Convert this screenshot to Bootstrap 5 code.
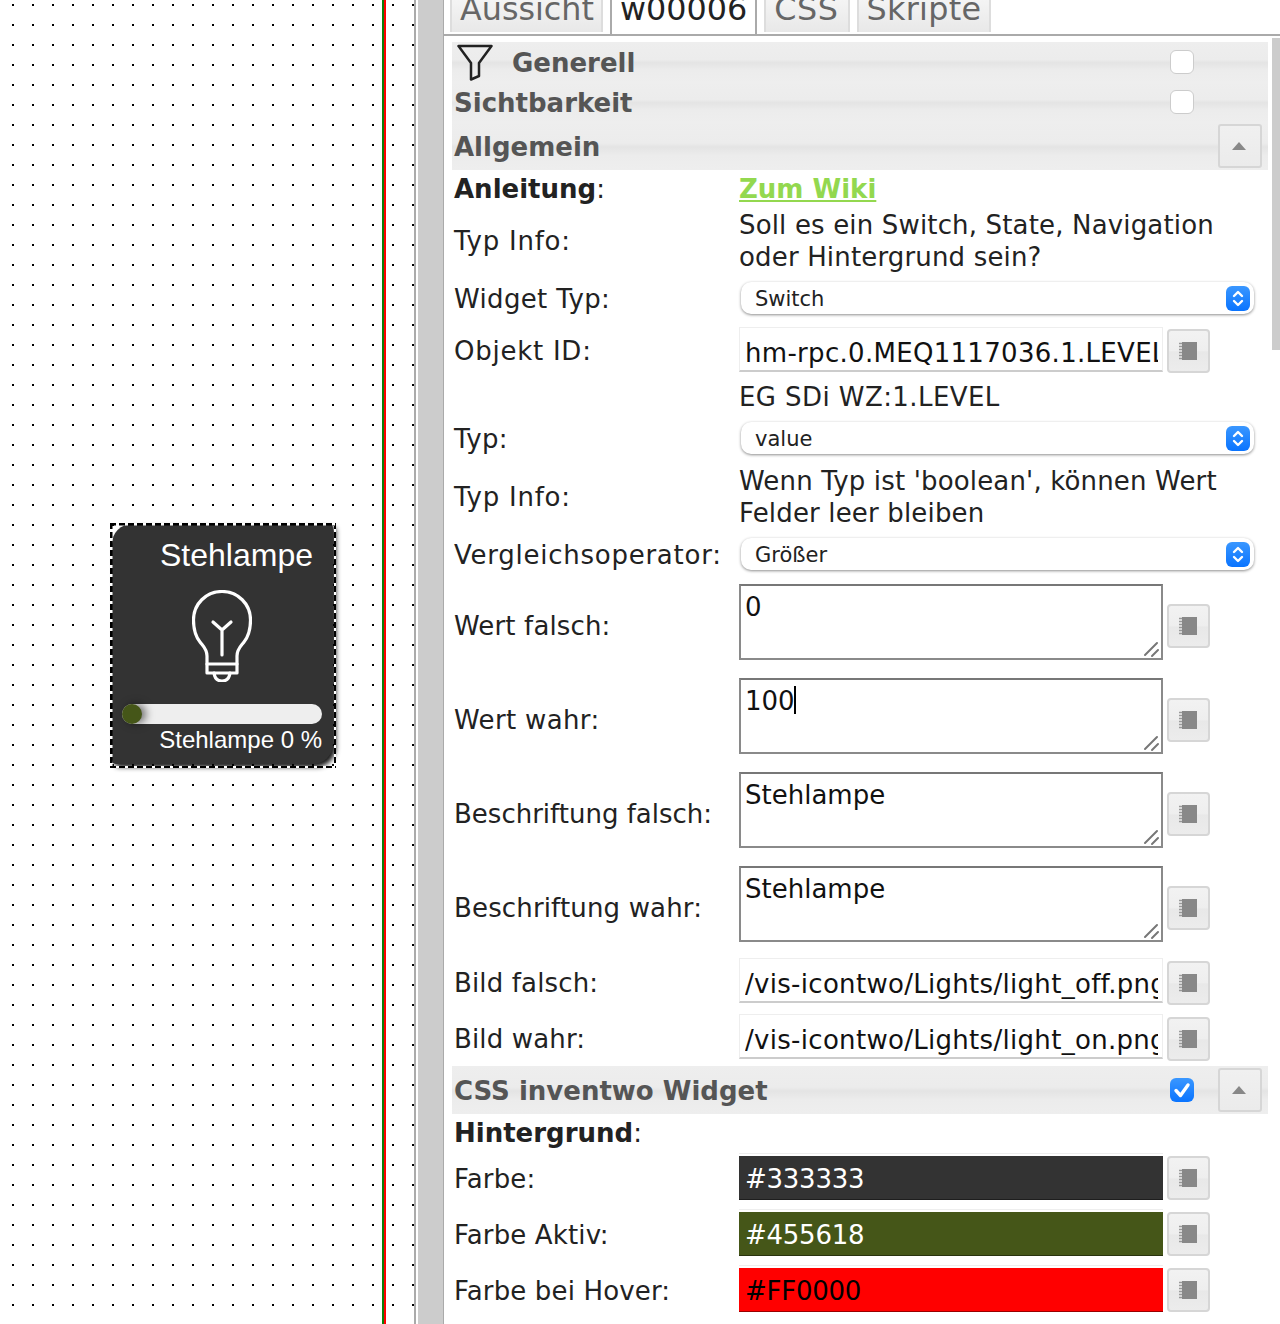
<!DOCTYPE html>
<html lang="de">
<head>
<meta charset="utf-8">
<title>Widget</title>
<link href="https://cdn.jsdelivr.net/npm/bootstrap@5.3.0/dist/css/bootstrap.min.css" rel="stylesheet">
<style>
html,body{height:1324px;overflow:hidden;background:#fff;}
body{font-family:"DejaVu Sans",sans-serif;font-size:26px;line-height:32px;color:#222;}
.stage{width:1280px;height:1324px;}
.canvasbox{position:relative;width:416px;height:1324px;flex:none;border-right:2px solid #aaa;
 background-image:url("data:image/svg+xml,%3Csvg xmlns='http://www.w3.org/2000/svg' width='20' height='20'%3E%3Crect x='12' y='4' width='2' height='2' fill='%23000'/%3E%3C/svg%3E");}
.guide{position:absolute;left:382px;top:0;width:4px;height:1324px;background:linear-gradient(90deg,#0a800a 0 50%,#f00 50% 100%);}
.lampe{position:absolute;left:112px;top:524px;width:221px;height:240px;background:#333;color:#fff;font-family:"Liberation Sans",sans-serif;
 border-radius:20px 4px 20px 4px;box-shadow:3px 3px 5px rgba(0,0,0,.9);padding:0 11px 0 10px;}
.lampe-frame{position:absolute;left:-2px;top:-1px;right:-3px;bottom:-4px;pointer-events:none;
 background:
  repeating-linear-gradient(90deg,#000 0 6px,#fff 6px 9px) left top/100% 2.500px no-repeat,
  repeating-linear-gradient(90deg,#000 0 6px,#fff 6px 9px) left bottom/100% 2.500px no-repeat,
  repeating-linear-gradient(180deg,#000 0 6px,#fff 6px 9px) left top/2.500px 100% no-repeat,
  repeating-linear-gradient(180deg,#000 0 6px,#fff 6px 9px) right top/2.500px 100% no-repeat;}
.lampe-title{font-size:32px;line-height:36px;text-align:right;padding:13px 9px 0 0;}
.lampe-icon{display:block;margin:17px auto 0 70px;width:60px;height:92px;}
.lampe-track{height:20px;border-radius:10px;background:#eee;margin-top:22px;position:relative;}
.lampe-knob{position:absolute;left:0;top:0;width:20px;height:20px;border-radius:50%;background:#455618;box-shadow:4px 0 8px rgba(0,0,0,.55);}
.lampe-label{font-size:24px;line-height:28px;text-align:right;margin-top:2px;}
.gutter{width:25px;height:1324px;background:#ccc;flex:none;margin-left:2px;}
.panel{width:837px;flex:none;border-left:1px solid #aaa;position:relative;height:1324px;overflow:hidden;}
.scrolltrack{position:absolute;right:0;top:38px;width:8px;height:312px;background:#ccc;}
.tabbar{height:36px;border-bottom:2px solid #aaa;padding-left:6px;gap:7px;overflow:hidden;}
.tabitem{padding:0 8px;font-size:31.8px;line-height:42px;color:#666;background:linear-gradient(#f4f4f4 0,#e8e8e8 100%);border:1px solid #ddd;border-width:0 2px 0 2px;height:32px;display:flex;align-items:flex-end;}
.tabitem span{display:block;margin-bottom:2px;}
.tabitem.tabfirst{padding-right:7px;}
.tabitem.tabcss{letter-spacing:.6px;padding-right:9px;}
.tabitem.tablast{letter-spacing:.3px;}
.tabitem.tabnow{background:#fff;color:#222;border-color:#aaa;height:34px;}
.tabitem.tabnow span{margin-bottom:4px;}
.wrapbody{padding:6px 4px 0 8px;width:828px;}
.sect{background:linear-gradient(#eee 0,#ececec 44%,#e4e4e4 52%,#ececec 70%,#eee 100%);font-weight:700;color:#555;padding-left:2px;padding-top:2px;}
.sect.s40{height:40px;}
.sect.s48{height:48px;}
.sect.tight{margin-top:-1px;}
.filtericon{width:36px;height:38px;margin:-2px 19px 0 3px;flex:none;}
.sect-end{margin-left:auto;}
.slotcheck{width:48px;display:flex;justify-content:center;margin-top:-2px;}
.slotbtn{width:44px;margin-right:6px;margin-top:-2px;}
.slotbtn.gap12{margin-left:12px;}
.slotblank{width:62px;}
.tick.form-check-input{width:24px;height:24px;margin:0;border:1.5px solid #ccc;border-radius:6px;background-color:#fff;}
.tick.form-check-input:checked{border:0;background-size:100% 100%;
 background-image:url("data:image/svg+xml,%3Csvg xmlns='http://www.w3.org/2000/svg' viewBox='0 0 24 24'%3E%3Cpath d='M6 12.500l4.500 5L18 7' fill='none' stroke='%23fff' stroke-width='3.4' stroke-linecap='round' stroke-linejoin='round'/%3E%3C/svg%3E"),linear-gradient(#3a97ff,#0a74ff);}
.foldbtn{width:44px;height:44px;padding:0;border:2px solid #d6d6d6;border-radius:3px;background:linear-gradient(#f0f0f0,#ebebeb);display:flex;align-items:center;justify-content:center;}
.foldbtn i{display:block;width:0;height:0;border-left:7.500px solid transparent;border-right:7.500px solid transparent;border-bottom:8px solid #888;margin-right:2px;}
.frow{padding-left:2px;}
.fname{width:285px;flex:none;white-space:nowrap;}
.fname.low{padding-top:2px;}
.fval{width:424px;flex:none;}
.fval.widetext{width:500px;letter-spacing:.16px;}
.sp2{letter-spacing:.15px;}.sp3{letter-spacing:.35px;}.sp4{letter-spacing:.42px;}.sp7{letter-spacing:.75px;}
.upper{padding-bottom:2px;}
.rh36{height:36px;}.rh39{height:39px;}.rh50{height:50px;}.rh52{height:52px;}.rh56{height:56px;}.rh64{height:64px;}.rh94{height:94px;}
.dropped{padding-top:4px;}
.nudge{margin-top:2px;}
.fbtnslot{margin-left:4px;flex:none;}
.zumwiki{color:#93d84f;font-weight:700;text-decoration:underline;}
.picker{width:43px;height:44px;padding:0 2px 0 0;border:2px solid #d6d6d6;border-radius:4px;background:linear-gradient(#f2f2f2 0,#eee 50%,#e8e8e8 52%,#ececec 100%);display:flex;align-items:center;justify-content:center;}
.picker svg{display:block;}
.macselect.form-select{height:32px;width:513px;margin:0 0 2px 2px;padding:2px 40px 0 14px;font-family:"DejaVu Sans",sans-serif;font-size:21px;line-height:28px;color:#222;border:0;border-radius:10px;box-shadow:0 1px 3px rgba(0,0,0,.45);
 background-color:#fff;background-size:24px 25px;background-position:right 4px center;
 background-image:url("data:image/svg+xml,%3Csvg xmlns='http://www.w3.org/2000/svg' viewBox='0 0 24 25'%3E%3Cdefs%3E%3ClinearGradient id='g' x1='0' y1='0' x2='0' y2='1'%3E%3Cstop offset='0' stop-color='%233a97ff'/%3E%3Cstop offset='1' stop-color='%230a74ff'/%3E%3C/linearGradient%3E%3C/defs%3E%3Crect width='24' height='25' rx='6' fill='url(%23g)'/%3E%3Cpath d='M8 10l4-4 4 4M8 15l4 4 4-4' fill='none' stroke='%23fff' stroke-width='2.4' stroke-linecap='round' stroke-linejoin='round'/%3E%3C/svg%3E");}
.macselect.nudge.form-select{margin-top:2px;}
.lineinput.form-control{height:45px;width:424px;padding:7px 4px 0 5px;font-family:"DejaVu Sans",sans-serif;font-size:26px;line-height:34px;letter-spacing:.3px;color:#111;border:1px solid #eee;border-bottom:2px solid #ccc;border-radius:0;background:#fff;box-shadow:none;}
.riseA{margin-bottom:3px;}
.riseB{margin-bottom:5px;}
.areainput.form-control{display:block;height:76px;width:424px;min-height:0;padding:4px 4px 0 4px;font-family:"DejaVu Sans",sans-serif;font-size:26px;line-height:34px;color:#111;border:2px solid #8a8a8a;border-top-color:#777;border-radius:0;background:#fff;box-shadow:none;resize:none;}
.areabox{position:relative;margin-top:-8px;}
.grip{position:absolute;left:0;top:0;width:424px;height:76px;pointer-events:none;}
.caret-mark{position:absolute;left:55px;top:8px;width:2px;height:28px;background:#000;}
.swatch.form-control{height:44px;width:424px;padding:2px 6px 0;font-family:"DejaVu Sans",sans-serif;font-size:26px;line-height:42px;letter-spacing:-.25px;color:#fff;border:0;border-bottom:1px solid rgba(0,0,0,.4);border-radius:0;box-shadow:0 -2px 0 #fff,0 -3px 0 #eee;}
.c1.form-control{background:#333;}.c2.form-control{background:#455618;}.c3.form-control{background:#f00;color:#000;}
</style>
</head>
<body>
<svg width="0" height="0" class="d-block position-absolute" aria-hidden="true"><defs>
 <symbol id="nb" viewBox="0 0 18 18"><rect x="3" y="0" width="15" height="18" fill="#888"/><path d="M0 1.500h3M0 4.500h3M0 7.500h3M0 10.500h3M0 13.500h3M0 16.500h3" stroke="#999" stroke-width="1.500"/></symbol>
 <symbol id="gr" viewBox="0 0 424 76"><path d="M406 71l12-12M413 72l6-6" stroke="#777" stroke-width="2" stroke-linecap="round" fill="none"/></symbol>
</defs></svg>
<div class="stage d-flex">
 <div class="canvasbox">
  <div class="guide"></div>
  <div class="lampe">
   <div class="lampe-title">Stehlampe</div>
   <svg class="lampe-icon" viewBox="0 0 60 92" fill="none" stroke="#fff" stroke-width="3.200" stroke-linecap="round" stroke-linejoin="round">
    <path d="M15 83V66c0-7-4-10-7-14C4 47 1.500 40 1.500 30 1.500 14 14 1.500 30 1.500S58.500 14 58.500 30c0 10-2.500 17-6.500 22-3 4-7 7-7 14v17z"/>
    <path d="M15 74h30"/>
    <path d="M22 83q1 8 8 8t8-8"/>
    <path d="M30 65V40M21 32l9 8 9-8"/>
   </svg>
   <div class="lampe-track"><div class="lampe-knob"></div></div>
   <div class="lampe-label">Stehlampe 0 %</div>
   <div class="lampe-frame"></div>
  </div>
 </div>
 <div class="gutter"></div>
 <div class="panel">
  <div class="scrolltrack"></div>
  <div class="tabbar d-flex align-items-start">
   <div class="tabitem tabfirst"><span>Aussicht</span></div>
   <div class="tabitem tabnow"><span>w00006</span></div>
   <div class="tabitem tabcss"><span>CSS</span></div>
   <div class="tabitem tablast"><span>Skripte</span></div>
  </div>
  <div class="wrapbody">
   <div class="sect s40 d-flex align-items-center">
    <svg class="filtericon" viewBox="0 0 36 38" fill="none" stroke="#222" stroke-width="2.500" stroke-linejoin="round"><path d="M1.500 3h33L22 20v13l-8 3.500V20z"/></svg>
    <span>Generell</span>
    <span class="sect-end slotcheck"><input class="form-check-input tick" type="checkbox" aria-label="Generell"></span><span class="slotblank"></span>
   </div>
   <div class="sect s40 d-flex align-items-center">
    <span>Sichtbarkeit</span>
    <span class="sect-end slotcheck"><input class="form-check-input tick" type="checkbox" aria-label="Sichtbarkeit"></span><span class="slotblank"></span>
   </div>
   <div class="sect s48 d-flex align-items-center">
    <span>Allgemein</span>
    <span class="sect-end slotbtn"><button class="btn foldbtn" type="button" aria-label="Einklappen"><i></i></button></span>
   </div>

   <div class="frow rh39 upper d-flex align-items-center"><div class="fname"><b>Anleitung</b>:</div><div class="fval"><a class="zumwiki" href="#">Zum Wiki</a></div></div>
   <div class="frow rh64 d-flex align-items-center"><div class="fname sp7">Typ Info:</div><div class="fval widetext">Soll es ein Switch, State, Navigation oder Hintergrund sein?</div></div>
   <div class="frow rh52 d-flex align-items-center"><div class="fname sp3">Widget Typ:</div><select class="form-select macselect" aria-label="Widget Typ"><option>Switch</option></select></div>
   <div class="frow rh52 d-flex align-items-center"><div class="fname sp7">Objekt ID:</div><div class="fval riseA"><input class="form-control lineinput" value="hm-rpc.0.MEQ1117036.1.LEVEL" aria-label="Objekt ID"></div><div class="fbtnslot"><button class="btn picker" type="button" aria-label="Wählen"><svg width="18" height="18"><use href="#nb"/></svg></button></div></div>
   <div class="frow rh36 dropped d-flex align-items-center"><div class="fname"></div><div class="fval sp4">EG SDi WZ:1.LEVEL</div></div>
   <div class="frow rh52 d-flex align-items-center"><div class="fname sp3">Typ:</div><select class="form-select macselect" aria-label="Typ"><option>value</option></select></div>
   <div class="frow rh64 d-flex align-items-center"><div class="fname sp7">Typ Info:</div><div class="fval widetext">Wenn Typ ist 'boolean', können Wert Felder leer bleiben</div></div>
   <div class="frow rh50 d-flex align-items-center"><div class="fname nudge sp7">Vergleichsoperator:</div><select class="form-select macselect nudge" aria-label="Vergleichsoperator"><option>Größer</option></select></div>

   <div class="frow rh94 d-flex align-items-center"><div class="fname sp2">Wert falsch:</div><div class="fval areabox"><textarea class="form-control areainput" aria-label="Wert falsch">0</textarea><svg class="grip"><use href="#gr"/></svg></div><div class="fbtnslot"><button class="btn picker" type="button" aria-label="Wählen"><svg width="18" height="18"><use href="#nb"/></svg></button></div></div>
   <div class="frow rh94 d-flex align-items-center"><div class="fname sp3">Wert wahr:</div><div class="fval areabox"><textarea class="form-control areainput" aria-label="Wert wahr">100</textarea><svg class="grip"><use href="#gr"/></svg><span class="caret-mark"></span></div><div class="fbtnslot"><button class="btn picker" type="button" aria-label="Wählen"><svg width="18" height="18"><use href="#nb"/></svg></button></div></div>
   <div class="frow rh94 d-flex align-items-center"><div class="fname">Beschriftung falsch:</div><div class="fval areabox"><textarea class="form-control areainput" aria-label="Beschriftung falsch">Stehlampe</textarea><svg class="grip"><use href="#gr"/></svg></div><div class="fbtnslot"><button class="btn picker" type="button" aria-label="Wählen"><svg width="18" height="18"><use href="#nb"/></svg></button></div></div>
   <div class="frow rh94 d-flex align-items-center"><div class="fname sp2">Beschriftung wahr:</div><div class="fval areabox"><textarea class="form-control areainput" aria-label="Beschriftung wahr">Stehlampe</textarea><svg class="grip"><use href="#gr"/></svg></div><div class="fbtnslot"><button class="btn picker" type="button" aria-label="Wählen"><svg width="18" height="18"><use href="#nb"/></svg></button></div></div>
   <div class="frow rh56 d-flex align-items-center"><div class="fname sp2">Bild falsch:</div><div class="fval riseB"><input class="form-control lineinput" value="/vis-icontwo/Lights/light_off.png" aria-label="Bild falsch"></div><div class="fbtnslot"><button class="btn picker" type="button" aria-label="Wählen"><svg width="18" height="18"><use href="#nb"/></svg></button></div></div>
   <div class="frow rh56 d-flex align-items-center"><div class="fname sp2">Bild wahr:</div><div class="fval riseB"><input class="form-control lineinput" value="/vis-icontwo/Lights/light_on.png" aria-label="Bild wahr"></div><div class="fbtnslot"><button class="btn picker" type="button" aria-label="Wählen"><svg width="18" height="18"><use href="#nb"/></svg></button></div></div>

   <div class="sect s48 tight d-flex align-items-center">
    <span>CSS inventwo Widget</span>
    <span class="sect-end slotcheck"><input class="form-check-input tick" type="checkbox" checked aria-label="CSS inventwo Widget"></span>
    <span class="slotbtn gap12"><button class="btn foldbtn" type="button" aria-label="Einklappen"><i></i></button></span>
   </div>
   <div class="frow rh36 d-flex align-items-center"><div class="fname low"><b>Hintergrund</b>:</div></div>
   <div class="frow rh56 d-flex align-items-center"><div class="fname low sp2">Farbe:</div><div class="fval"><input class="form-control swatch c1" value="#333333" aria-label="Farbe"></div><div class="fbtnslot"><button class="btn picker" type="button" aria-label="Wählen"><svg width="18" height="18"><use href="#nb"/></svg></button></div></div>
   <div class="frow rh56 d-flex align-items-center"><div class="fname low sp2">Farbe Aktiv:</div><div class="fval"><input class="form-control swatch c2" value="#455618" aria-label="Farbe Aktiv"></div><div class="fbtnslot"><button class="btn picker" type="button" aria-label="Wählen"><svg width="18" height="18"><use href="#nb"/></svg></button></div></div>
   <div class="frow rh56 d-flex align-items-center"><div class="fname low sp2">Farbe bei Hover:</div><div class="fval"><input class="form-control swatch c3" value="#FF0000" aria-label="Farbe bei Hover"></div><div class="fbtnslot"><button class="btn picker" type="button" aria-label="Wählen"><svg width="18" height="18"><use href="#nb"/></svg></button></div></div>
  </div>
 </div>
</div>
<script src="https://cdn.jsdelivr.net/npm/bootstrap@5.3.0/dist/js/bootstrap.bundle.min.js"></script>
</body>
</html>
